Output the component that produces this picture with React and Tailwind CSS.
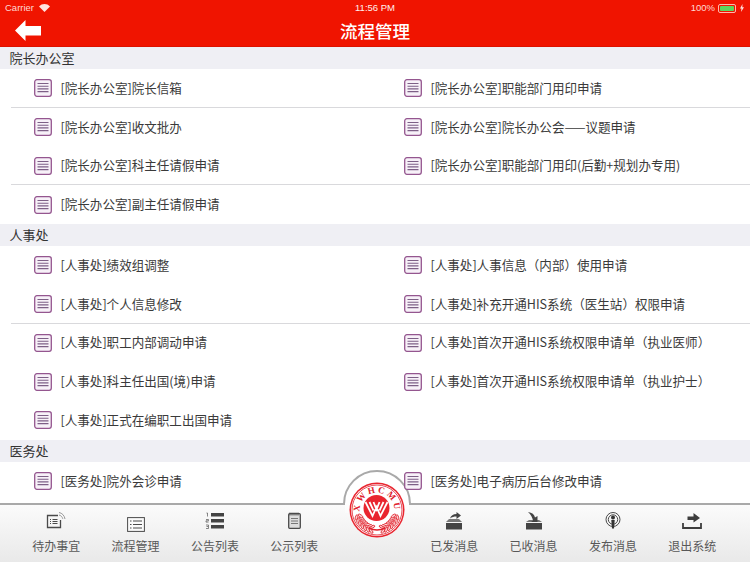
const FONT = '"Noto Sans CJK SC","Liberation Sans",sans-serif';
const LATIN = '"Liberation Sans",sans-serif';

const sections = [
  { title: "院长办公室", items: [
    ["[院长办公室]院长信箱", "[院长办公室]职能部门用印申请"],
    ["[院长办公室]收文批办", "[院长办公室]院长办公会——议题申请"],
    ["[院长办公室]科主任请假申请", "[院长办公室]职能部门用印(后勤+规划办专用)"],
    ["[院长办公室]副主任请假申请", null],
  ], lines: [0, 2] },
  { title: "人事处", items: [
    ["[人事处]绩效组调整", "[人事处]人事信息（内部）使用申请"],
    ["[人事处]个人信息修改", "[人事处]补充开通HIS系统（医生站）权限申请"],
    ["[人事处]职工内部调动申请", "[人事处]首次开通HIS系统权限申请单（执业医师）"],
    ["[人事处]科主任出国(境)申请", "[人事处]首次开通HIS系统权限申请单（执业护士）"],
    ["[人事处]正式在编职工出国申请", null],
  ], lines: [1] },
  { title: "医务处", items: [
    ["[医务处]院外会诊申请", "[医务处]电子病历后台修改申请"],
  ], lines: [] },
];

function DocIcon() {
  return (
    <svg width="18" height="18" viewBox="0 0 18 18" className="shrink-0">
      <rect x="0.7" y="0.7" width="16.6" height="16.6" rx="2.2" fill="#f7f1f8" stroke="#94568f" strokeWidth="1.3" />
      <path d="M3.5 4.500h11M3.500 7.200h11M3.500 9.900h11M3.500 12.600h11" stroke="#7d5f86" strokeWidth="1.1" />
    </svg>
  );
}

function Item({ text }) {
  return (
    <div className="flex items-center h-full">
      {text && (
        <>
          <div className="ml-[34px] mr-[8.500px] flex"><DocIcon /></div>
          <span className="text-[12.55px] text-[#3a3a3a] whitespace-nowrap">{text}</span>
        </>
      )}
    </div>
  );
}

function Tab({ label, children, dy = "" }) {
  return (
    <div className="w-[79.4px] flex flex-col items-center">
      <div className={`h-[20px] flex items-start justify-center ${dy}`}>{children}</div>
      <span className="mt-[5px] text-[12px] leading-[17px] text-[#585858] whitespace-nowrap">{label}</span>
    </div>
  );
}

const g = "#4a4a4a";
const icons = {
  todo: (
    <svg width="20" height="18" viewBox="0 0 20 18">
      <path d="M12 3.500H1.500v12h13V8" fill="none" stroke={g} strokeWidth="1.300" />
      <path d="M4 7.500h1M4 9.500h1M4 11.500h1M6.500 7.500h5M6.500 9.500h5M6.500 11.500h5" stroke={g} strokeWidth="1.200" />
      <path d="M13 .5c3 .5 5.500 3 6 6.500M13 3c1.800.4 3.300 1.800 3.800 3.800" fill="none" stroke="#999" strokeWidth="1" />
    </svg>
  ),
  flow: (
    <svg width="18" height="15" viewBox="0 0 18 15">
      <rect x="0.6" y="0.6" width="16.800" height="13.800" fill="#fafafa" stroke={g} strokeWidth="1" />
      <path d="M3 4h1.500M3 7.500h1.500M3 11h1.500M6 4h9M6 7.500h9M6 11h9" stroke={g} strokeWidth="1" />
    </svg>
  ),
  notice: (
    <svg width="19" height="18" viewBox="0 0 19 18">
      <path d="M6 1h13v3.500H6zM6 7h13v3.500H6zM6 13h13v3.500H6z" fill="#444" />
      <path d="M1.500 1h1v3.500M1 7.500h2.500v1.300H1v1.300h2.500M1 13h2.500v1.500H1.500M3.500 14.500v2H1" fill="none" stroke="#555" strokeWidth=".7" />
    </svg>
  ),
  publicity: (
    <svg width="13" height="17" viewBox="0 0 13 17">
      <rect x="0.700" y="1.700" width="11.600" height="14.600" rx="1" fill="#ddd" stroke={g} strokeWidth="1.300" />
      <path d="M2 0.500v3M4 0.500v3M6 0.500v3M8 0.500v3M10 0.500v3" stroke={g} strokeWidth="1" />
      <path d="M3 6.500h7M3 9h7M3 11.500h7" stroke="#777" strokeWidth="1" />
    </svg>
  ),
  sent: (
    <svg width="16" height="18" viewBox="0 0 16 18">
      <path d="M0 17.500V11h16v6.500z" fill="#444" />
      <path d="M0 10l3-3h10l3 3z" fill="#777" />
      <path d="M4 6.500c1-3 3-4.500 6.500-4.500V0L15 3.500 10.500 7V4.500C8 4.500 6 5 4 6.500z" fill="#444" />
    </svg>
  ),
  recv: (
    <svg width="16" height="18" viewBox="0 0 16 18">
      <path d="M0 17.500V11h16v6.500z" fill="#444" />
      <path d="M0 10l3-2h10l3 2z" fill="#777" />
      <path d="M2 0c4 .5 6.500 2.500 7 5.500L11.500 4v6H5l2-1.500C6.500 6 5 2.500 2 0z" fill="#444" />
    </svg>
  ),
  pub: (
    <svg width="16" height="18" viewBox="0 0 16 18">
      <circle cx="8" cy="7.500" r="7" fill="none" stroke={g} strokeWidth="1" />
      <circle cx="8" cy="7.500" r="4.700" fill="none" stroke={g} strokeWidth="1" />
      <circle cx="8" cy="5.500" r="2" fill="#333" />
      <path d="M6.300 8h3.400L9 16.500H7z" fill="#333" />
    </svg>
  ),
  exit: (
    <svg width="20" height="17" viewBox="0 0 20 17">
      <path d="M5.500 4.500h6V1L18 6l-6.500 4.500V8h-6z" fill="#3d3d3d" />
      <path d="M1 11v5h18v-5" fill="none" stroke="#3d3d3d" strokeWidth="1.800" />
    </svg>
  ),
};

function Logo() {
  const leaves = [];
  for (let i = 0; i < 7; i++) {
    const a = 106 + i * 9;
    const aR = 74 - i * 9;
    [a, aR].forEach((deg, k) => {
      const r = (deg * Math.PI) / 180;
      [17.5, 21.8].forEach((rad, n) => {
        const x = 28 + rad * Math.cos(r);
        const y = 28 + rad * Math.sin(r);
        leaves.push(
          <ellipse key={`${i}-${k}-${n}`} cx={x} cy={y} rx="2.800" ry="1.200" fill="#fbd5d5" stroke="#e0202c" strokeWidth=".8"
            transform={`rotate(${deg + (k ? 55 : -55) * (n ? 1 : -1)} ${x} ${y})`} />
        );
      });
    });
  }
  return (
    <svg width="56" height="56" viewBox="0 0 56 56">
      <circle cx="28" cy="28" r="27.500" fill="#e9252f" />
      <circle cx="28" cy="28" r="26" fill="#fff" />
      <circle cx="28" cy="28" r="25" fill="none" stroke="#e0202c" strokeWidth=".8" />
      <defs><path id="logoArc" d="M11.300 32A17.200 17.200 0 1 1 44.700 32" /></defs>
      <text fontFamily="Liberation Serif, serif" fontSize="9" fontWeight="700" fill="#e0202c" letterSpacing="2.200">
        <textPath href="#logoArc" startOffset="50%" textAnchor="middle">XWHCMU</textPath>
      </text>
      <g>{leaves}</g>
      <circle cx="27.500" cy="26" r="13.800" fill="#fff" />
      <circle cx="27.500" cy="26" r="13" fill="#e9252f" />
      <path d="M16.500 20l7 14 4-9 4 9 7-14M20.500 20l4 8.500M30.500 28.500l4-8.500M24.500 20l3 7.500 3-7.500" fill="none" stroke="#fff" strokeWidth="1.800" />
      <path d="M20 46c5 2.500 11 2.500 16 0" fill="none" stroke="#e0202c" strokeWidth="1.500" />
    </svg>
  );
}

export default function App() {
  return (
    <div className="relative w-[750px] h-[562px] overflow-hidden bg-white flex flex-col" style={{ fontFamily: FONT }}>
      <header className="h-[47px] shrink-0 bg-[#f01400] border-b border-[#dd1100] relative flex items-center justify-center pt-[15px]">
        <div className="absolute top-[2px] left-[5px] flex items-center gap-[5px] text-[9.5px] leading-[12px] text-[#ffd9d4]" style={{ fontFamily: LATIN }}>
          <span>Carrier</span>
          <svg width="11" height="8" viewBox="0 0 11 8"><path d="M5.500 8L0 2.500C3 -.8 8 -.8 11 2.500z" fill="#ffe4e0" /></svg>
        </div>
        <div className="absolute top-[2px] left-0 right-0 text-center text-[9.500px] leading-[12px] text-[#fff0ee]" style={{ fontFamily: LATIN }}>11:56 PM</div>
        <div className="absolute top-[2px] right-[6px] flex items-center gap-[3px] text-[9.500px] leading-[12px] text-[#ffd9d4]" style={{ fontFamily: LATIN }}>
          <span>100%</span>
          <span className="w-[18px] h-[9px] border border-[#ffb8ad] rounded-[2px] p-[1px] flex"><span className="flex-1 bg-[#5cd65c] rounded-[1px]" /></span>
          <svg width="4" height="8" viewBox="0 0 4 8" className="ml-[1px]"><path d="M2.500 0L0 4.500h1.500L1 8l3-4.800H2.300z" fill="#ffe4e0" /></svg>
        </div>
        <svg width="26" height="21" viewBox="0 0 26 21" className="absolute left-[15px] top-[20px]">
          <path d="M0 10.500L10.500 0v6H26v9.500H10.500V21z" fill="#fff" />
        </svg>
        <h1 className="text-[17.500px] leading-[24px] font-medium text-white">流程管理</h1>
      </header>

      <div className="absolute left-[343px] top-[470px] w-[68px] h-[68px] rounded-full bg-white border-2 border-[#a9a9a9] [clip-path:inset(0_0_50%_0)]" />

      <main className="relative flex-1 min-h-0 overflow-hidden">
        {sections.map((s) => (
          <section key={s.title}>
            <h2 className="h-[22px] pl-[9.500px] bg-[#efeff4] text-[13px] leading-[22px] font-normal text-[#333]">{s.title}</h2>
            {s.items.map((row, i) => (
              <div key={i} className="relative h-[38.75px] grid grid-cols-[370px_380px]">
                <Item text={row[0]} />
                <Item text={row[1]} />
                {s.lines.includes(i) && <div className="absolute right-0 bottom-0 left-[11px] h-px bg-[#d9d9dc]" />}
              </div>
            ))}
          </section>
        ))}
      </main>

      <footer className="absolute left-0 right-0 bottom-0 h-[59px] border-t-2 border-[#a9a9a9] bg-gradient-to-b from-[#fbfbfb] to-[#e9e9e9] flex pt-[7px]">
        <div className="flex pl-[16.500px]">
          <Tab label="待办事宜">{icons.todo}</Tab>
          <Tab label="流程管理" dy="pt-[5px]">{icons.flow}</Tab>
          <Tab label="公告列表">{icons.notice}</Tab>
          <Tab label="公示列表">{icons.publicity}</Tab>
        </div>
        <div className="flex ml-auto pr-[18px]">
          <Tab label="已发消息">{icons.sent}</Tab>
          <Tab label="已收消息">{icons.recv}</Tab>
          <Tab label="发布消息">{icons.pub}</Tab>
          <Tab label="退出系统">{icons.exit}</Tab>
        </div>
      </footer>

      <div className="absolute left-[345px] top-[503px] w-[64px] h-[10px] bg-gradient-to-b from-white to-[#fafafa]" />
      <div className="absolute left-[349px] top-[482px]"><Logo /></div>
    </div>
  );
}
